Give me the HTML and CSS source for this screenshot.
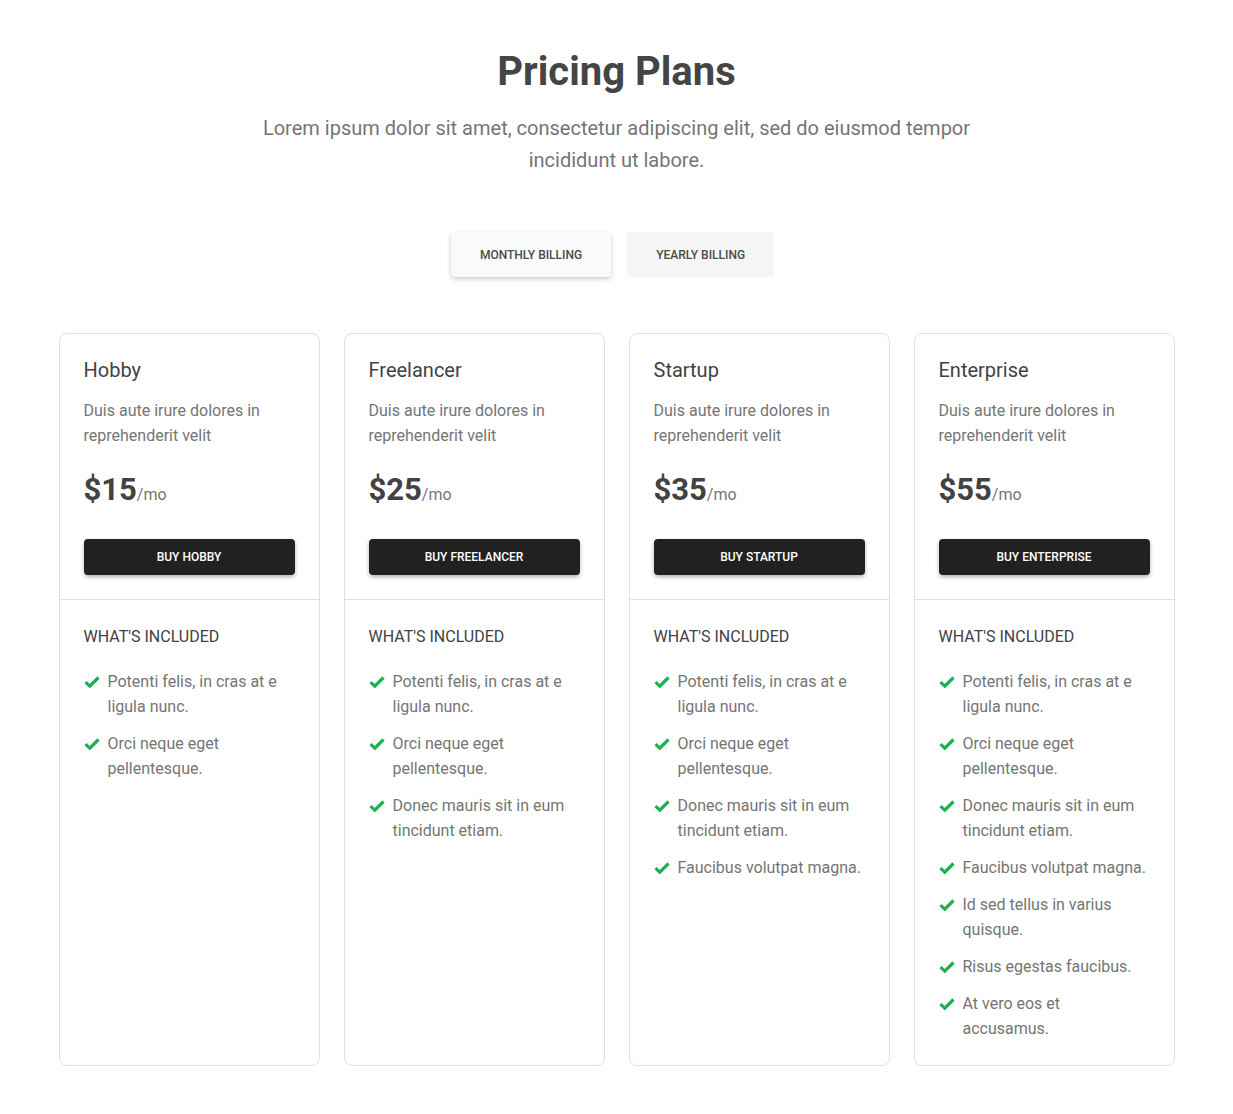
FILE: index.html
```html
<!DOCTYPE html>
<html lang="en">
<head>
<meta charset="utf-8">
<title>Pricing Plans</title>
<link rel="stylesheet" href="styles.css">
</head>
<body>
<main class="page">
  <header class="intro">
    <h1 class="title">Pricing Plans</h1>
    <p class="subtitle">Lorem ipsum dolor sit amet, consectetur adipiscing elit, sed do eiusmod tempor incididunt ut labore.</p>
  </header>

  <div class="toggle">
    <button class="toggle-btn active">Monthly billing</button>
    <button class="toggle-btn">Yearly billing</button>
  </div>

  <section class="plans">
    <article class="card">
      <div class="card-top">
        <h2 class="plan-name">Hobby</h2>
        <p class="plan-desc">Duis aute irure dolores in reprehenderit velit</p>
        <p class="price"><span class="amount">$15</span><span class="per">/mo</span></p>
        <button class="buy">Buy Hobby</button>
      </div>
      <div class="card-bottom">
        <h3 class="included">What's included</h3>
        <ul class="features">
          <li><svg class="check" viewBox="0 0 16 12"><path d="M1.5 6.2 L5.8 10.2 L14.5 1.5"/></svg><span>Potenti felis, in cras at e ligula nunc.</span></li>
          <li><svg class="check" viewBox="0 0 16 12"><path d="M1.5 6.2 L5.8 10.2 L14.5 1.5"/></svg><span>Orci neque eget pellentesque.</span></li>
        </ul>
      </div>
    </article>

    <article class="card">
      <div class="card-top">
        <h2 class="plan-name">Freelancer</h2>
        <p class="plan-desc">Duis aute irure dolores in reprehenderit velit</p>
        <p class="price"><span class="amount">$25</span><span class="per">/mo</span></p>
        <button class="buy">Buy Freelancer</button>
      </div>
      <div class="card-bottom">
        <h3 class="included">What's included</h3>
        <ul class="features">
          <li><svg class="check" viewBox="0 0 16 12"><path d="M1.5 6.2 L5.8 10.2 L14.5 1.5"/></svg><span>Potenti felis, in cras at e ligula nunc.</span></li>
          <li><svg class="check" viewBox="0 0 16 12"><path d="M1.5 6.2 L5.8 10.2 L14.5 1.5"/></svg><span>Orci neque eget pellentesque.</span></li>
          <li><svg class="check" viewBox="0 0 16 12"><path d="M1.5 6.2 L5.8 10.2 L14.5 1.5"/></svg><span>Donec mauris sit in eum tincidunt etiam.</span></li>
        </ul>
      </div>
    </article>

    <article class="card">
      <div class="card-top">
        <h2 class="plan-name">Startup</h2>
        <p class="plan-desc">Duis aute irure dolores in reprehenderit velit</p>
        <p class="price"><span class="amount">$35</span><span class="per">/mo</span></p>
        <button class="buy">Buy Startup</button>
      </div>
      <div class="card-bottom">
        <h3 class="included">What's included</h3>
        <ul class="features">
          <li><svg class="check" viewBox="0 0 16 12"><path d="M1.5 6.2 L5.8 10.2 L14.5 1.5"/></svg><span>Potenti felis, in cras at e ligula nunc.</span></li>
          <li><svg class="check" viewBox="0 0 16 12"><path d="M1.5 6.2 L5.8 10.2 L14.5 1.5"/></svg><span>Orci neque eget pellentesque.</span></li>
          <li><svg class="check" viewBox="0 0 16 12"><path d="M1.5 6.2 L5.8 10.2 L14.5 1.5"/></svg><span>Donec mauris sit in eum tincidunt etiam.</span></li>
          <li><svg class="check" viewBox="0 0 16 12"><path d="M1.5 6.2 L5.8 10.2 L14.5 1.5"/></svg><span>Faucibus volutpat magna.</span></li>
        </ul>
      </div>
    </article>

    <article class="card">
      <div class="card-top">
        <h2 class="plan-name">Enterprise</h2>
        <p class="plan-desc">Duis aute irure dolores in reprehenderit velit</p>
        <p class="price"><span class="amount">$55</span><span class="per">/mo</span></p>
        <button class="buy">Buy Enterprise</button>
      </div>
      <div class="card-bottom">
        <h3 class="included">What's included</h3>
        <ul class="features">
          <li><svg class="check" viewBox="0 0 16 12"><path d="M1.5 6.2 L5.8 10.2 L14.5 1.5"/></svg><span>Potenti felis, in cras at e ligula nunc.</span></li>
          <li><svg class="check" viewBox="0 0 16 12"><path d="M1.5 6.2 L5.8 10.2 L14.5 1.5"/></svg><span>Orci neque eget pellentesque.</span></li>
          <li><svg class="check" viewBox="0 0 16 12"><path d="M1.5 6.2 L5.8 10.2 L14.5 1.5"/></svg><span>Donec mauris sit in eum tincidunt etiam.</span></li>
          <li><svg class="check" viewBox="0 0 16 12"><path d="M1.5 6.2 L5.8 10.2 L14.5 1.5"/></svg><span>Faucibus volutpat magna.</span></li>
          <li><svg class="check" viewBox="0 0 16 12"><path d="M1.5 6.2 L5.8 10.2 L14.5 1.5"/></svg><span>Id sed tellus in varius quisque.</span></li>
          <li><svg class="check" viewBox="0 0 16 12"><path d="M1.5 6.2 L5.8 10.2 L14.5 1.5"/></svg><span>Risus egestas faucibus.</span></li>
          <li><svg class="check" viewBox="0 0 16 12"><path d="M1.5 6.2 L5.8 10.2 L14.5 1.5"/></svg><span>At vero eos et accusamus.</span></li>
        </ul>
      </div>
    </article>
  </section>
</main>
</body>
</html>
```

FILE: styles.css
```css
* { box-sizing: border-box; }

html, body {
  margin: 0;
  padding: 0;
  background: #ffffff;
}

body {
  font-family: Roboto, "Noto Sans", "Liberation Sans", sans-serif;
  color: #424242;
}

.page {
  width: 1116px;
  margin: 0 auto;
  padding: 48px 0 48px;
}

.intro {
  text-align: center;
}

.title {
  margin: 0;
  font-size: 40px;
  line-height: 48px;
  font-weight: 700;
  color: #454545;
}

.subtitle {
  margin: 16px auto 0;
  max-width: 740px;
  font-size: 20px;
  line-height: 32px;
  color: #757575;
}

.toggle {
  display: flex;
  justify-content: center;
  gap: 16px;
  margin-top: 56px;
  padding-right: 8px;
}

.toggle-btn {
  font-family: inherit;
  font-size: 12px;
  font-weight: 500;
  text-transform: uppercase;
  color: #4a4a4a;
  height: 45px;
  padding: 0 29px;
  border: none;
  border-radius: 4px;
  background: #f5f5f5;
}

.toggle-btn.active {
  background: #fafafa;
  box-shadow: 0 2px 5px rgba(0, 0, 0, 0.2);
}

.plans {
  display: grid;
  grid-template-columns: repeat(4, 1fr);
  gap: 24px;
  margin-top: 56px;
}

.card {
  border: 1px solid #e0e0e0;
  border-radius: 8px;
  display: flex;
  flex-direction: column;
}

.card-top {
  padding: 23px 24px 24px;
  border-bottom: 1px solid #e0e0e0;
}

.plan-name {
  margin: 0;
  font-size: 20px;
  line-height: 26px;
  font-weight: 400;
  color: #424242;
}

.plan-desc {
  margin: 15px 0 0;
  font-size: 16px;
  line-height: 25px;
  color: #757575;
}

.price {
  margin: 22px 0 0;
  line-height: 40px;
}

.amount {
  font-size: 31px;
  font-weight: 700;
  color: #424242;
}

.per {
  font-size: 16px;
  color: #757575;
}

.buy {
  display: block;
  width: 100%;
  height: 36px;
  margin-top: 24px;
  border: none;
  border-radius: 4px;
  background: #212121;
  color: #ffffff;
  font-family: inherit;
  font-size: 12px;
  font-weight: 500;
  text-transform: uppercase;
  box-shadow: 0 2px 4px rgba(0, 0, 0, 0.3);
}

.card-bottom {
  padding: 25px 24px 24px;
}

.included {
  margin: 0;
  font-size: 16px;
  line-height: 24px;
  font-weight: 400;
  text-transform: uppercase;
  color: #424242;
}

.features {
  list-style: none;
  margin: 20px 0 0;
  padding: 0;
  display: flex;
  flex-direction: column;
  gap: 12px;
}

.features li {
  display: flex;
  gap: 8px;
  font-size: 16px;
  line-height: 25px;
  color: #757575;
}

.check {
  flex: none;
  width: 16px;
  height: 12px;
  margin-top: 7px;
}

.check path {
  fill: none;
  stroke: #1eb152;
  stroke-width: 3.2;
  stroke-linecap: butt;
  stroke-linejoin: miter;
}
```
